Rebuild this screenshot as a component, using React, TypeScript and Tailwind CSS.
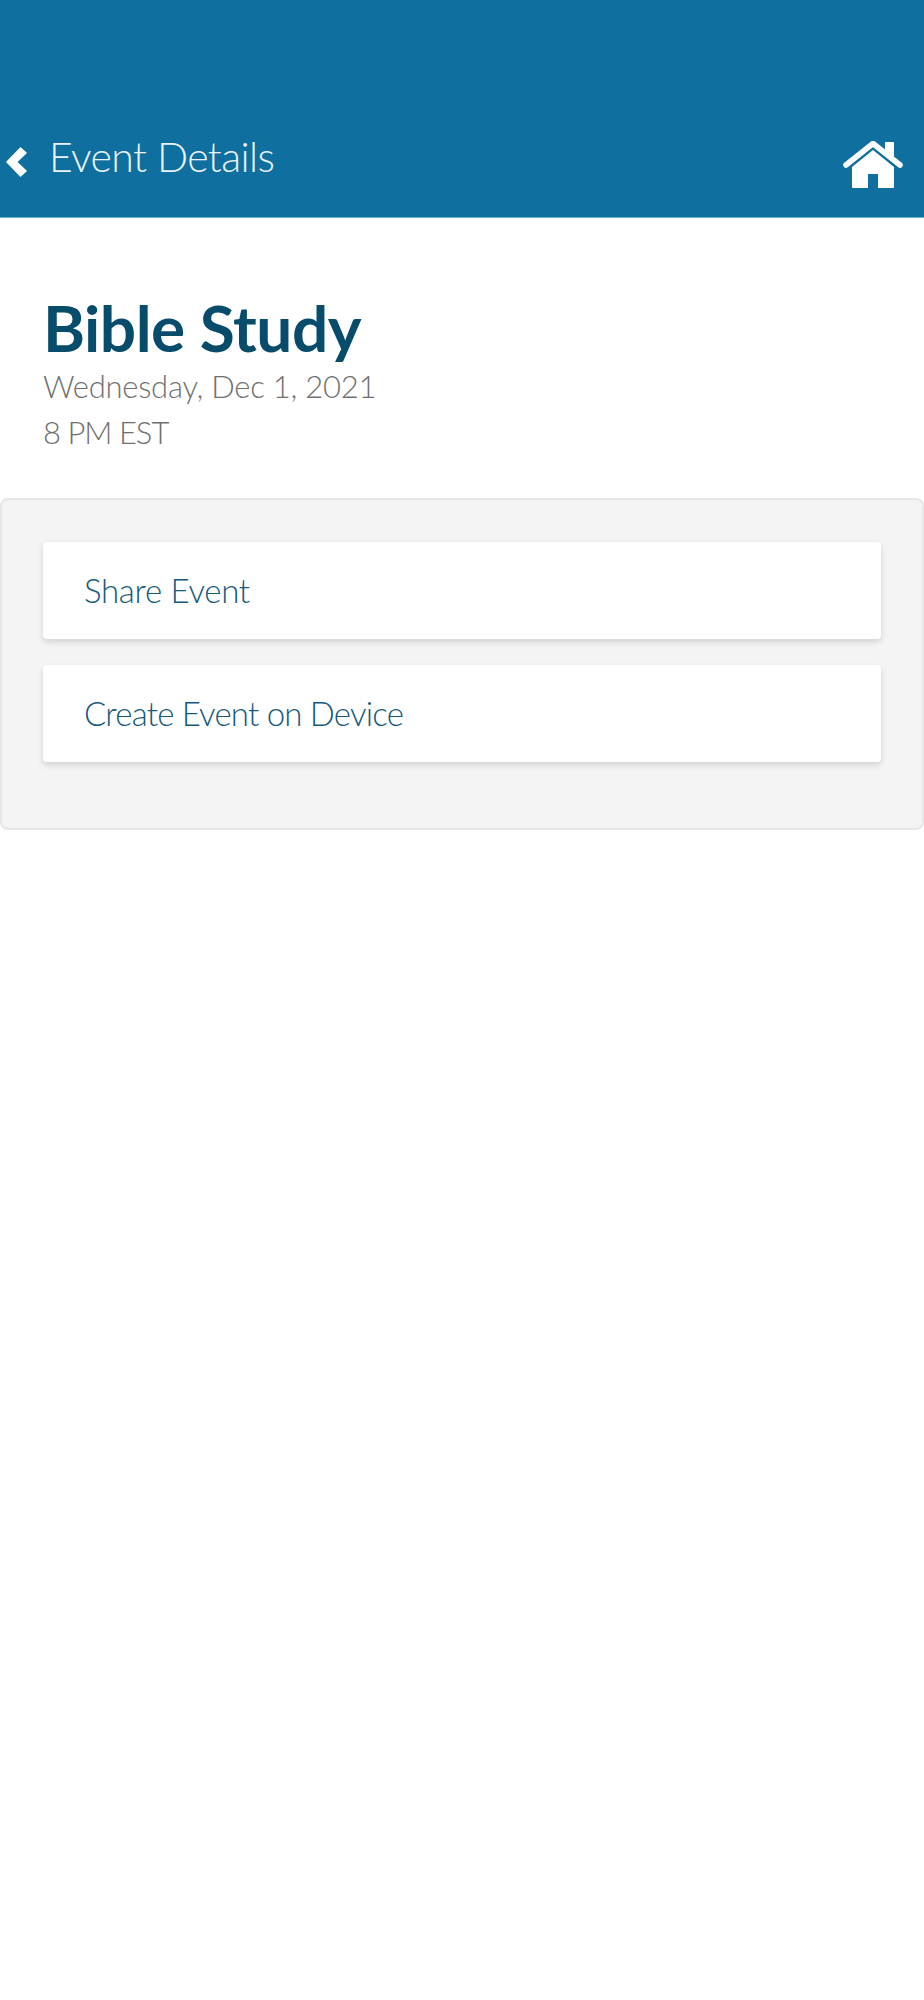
function ChevronLeft() {
  return (
    <svg viewBox="0 0 21 30" className="mb-[12px] h-[30px] w-[21px] fill-white stroke-white" strokeWidth="1.5" strokeLinejoin="round">
      <polygon points="1,15 14.5,1 20,6 10.5,15 20,24 14.5,29" />
    </svg>
  );
}

function HomeIcon() {
  return (
    <svg viewBox="0 0 60 48" className="h-[48px] w-[60px] fill-white">
      <rect x="42" y="1" width="9" height="14" rx="0.5" />
      <polyline points="3,24 30,2.5 57,24" fill="none" stroke="white" strokeWidth="5.5" strokeLinecap="round" strokeLinejoin="round" />
      <path d="M30 9 L51 26 V46 Q51 47 50 47 H35 V33 H25 V47 H10 Q9 47 9 46 V26 Z" />
    </svg>
  );
}

function ActionRow({ label, tracking }: { label: string; tracking: string }) {
  return (
    <a className={`flex h-[97px] items-center rounded-[4px] bg-white pl-[41px] text-[33px] font-light text-[#155a7a] shadow-[0_3px_6px_rgba(0,0,0,0.14)] ${tracking}`}>
      {label}
    </a>
  );
}

export default function App() {
  return (
    <div className="min-h-[2000px] bg-white font-['Lato','Open_Sans',sans-serif]">
      <header className="flex h-[218px] items-end justify-between border-b border-[#6db3d3] bg-[#0f6f9f] pb-[28px] pr-[21px] pl-[6px]">
        <div className="flex items-end gap-[22px]">
          <ChevronLeft />
          <h1 className="pb-[6px] text-[41px] leading-[52px] font-light tracking-[-0.6px] text-[#e9f3f8]">Event Details</h1>
        </div>
        <HomeIcon />
      </header>

      <section className="px-[43px] pt-[76px] pb-[43px]">
        <h2 className="text-[64px] leading-[68px] font-bold tracking-[-0.5px] text-[#084c6c]">Bible Study</h2>
        <p className="mt-[1px] text-[31px] leading-[46px] font-light tracking-[-0.25px] text-[#707070]">
          Wednesday, Dec 1, 2021
        </p>
        <p className="text-[31px] leading-[46px] font-light tracking-[-1px] text-[#707070]">8 PM EST</p>
      </section>

      <section className="flex flex-col gap-[26px] rounded-[8px] border-2 border-[#e6e6e6] bg-[#f4f4f4] px-[41px] pt-[42px] pb-[66px]">
        <ActionRow label="Share Event" tracking="tracking-[-0.3px]" />
        <ActionRow label="Create Event on Device" tracking="tracking-[-0.8px]" />
      </section>
    </div>
  );
}
